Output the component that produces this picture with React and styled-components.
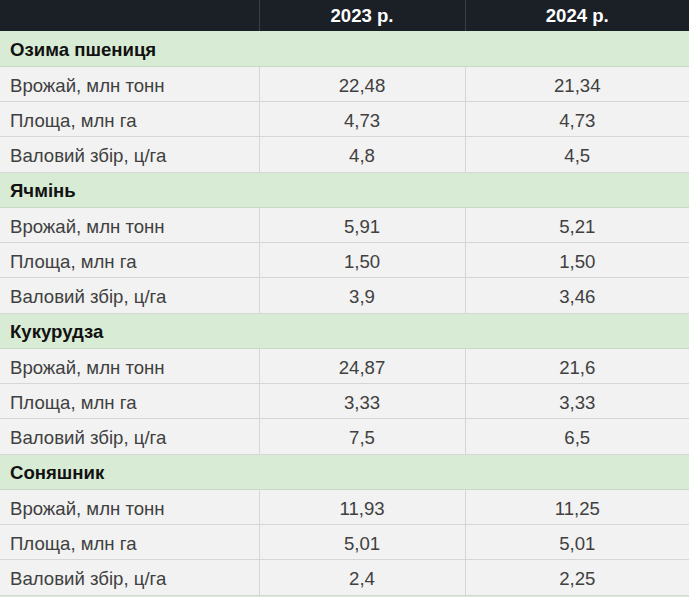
import { Fragment } from "react";
import styled, { createGlobalStyle } from "styled-components";

const GlobalStyle = createGlobalStyle`
  html, body {
    margin: 0;
    padding: 0;
    background: #f2f2f2;
    overflow: hidden;
  }
  body {
    font-family: "Liberation Sans", Arial, sans-serif;
  }
`

const Table = styled.table`
  width: 689px;
  border-collapse: collapse;
  table-layout: fixed;
  font-size: 18.6px;
  color: #404040;
`

const HeadRow = styled.tr`
  height: 31px;
`

const HeadCell = styled.th`
  padding: 1px 10px 0;
  background: #1b1f26;
  color: #ffffff;
  font-weight: bold;
  text-align: center;
  border-left: 1px solid #3a3f47;
  &:first-child {
    border-left: none;
  }
`

const SectionCell = styled.td`
  padding: 3px 10px 0;
  background: #d8ebd4;
  color: #111;
  font-weight: bold;
  border-bottom: 1px solid #c9d9c6;
`

const Row = styled.tr`
  height: 35.25px;
`

const Cell = styled.td`
  padding: 4px 10px 0;
  background: #f2f2f2;
  text-align: ${p => (p.$label ? "left" : "center")};
  border-bottom: 1px solid #d6d6d6;
  border-left: 1px solid #d6d6d6;
  &:first-child {
    border-left: none;
  }
`

const data = [
  {
    name: "Озима пшениця",
    rows: [
      ["Врожай, млн тонн", "22,48", "21,34"],
      ["Площа, млн га", "4,73", "4,73"],
      ["Валовий збір, ц/га", "4,8", "4,5"],
    ],
  },
  {
    name: "Ячмінь",
    rows: [
      ["Врожай, млн тонн", "5,91", "5,21"],
      ["Площа, млн га", "1,50", "1,50"],
      ["Валовий збір, ц/га", "3,9", "3,46"],
    ],
  },
  {
    name: "Кукурудза",
    rows: [
      ["Врожай, млн тонн", "24,87", "21,6"],
      ["Площа, млн га", "3,33", "3,33"],
      ["Валовий збір, ц/га", "7,5", "6,5"],
    ],
  },
  {
    name: "Соняшник",
    rows: [
      ["Врожай, млн тонн", "11,93", "11,25"],
      ["Площа, млн га", "5,01", "5,01"],
      ["Валовий збір, ц/га", "2,4", "2,25"],
    ],
  },
]

function App() {
  return (
    <>
      <GlobalStyle />
      <Table>
        <colgroup>
          <col style={{ width: 259 }} />
          <col style={{ width: 206 }} />
          <col />
        </colgroup>
        <thead>
          <HeadRow>
            <HeadCell></HeadCell>
            <HeadCell>2023 р.</HeadCell>
            <HeadCell>2024 р.</HeadCell>
          </HeadRow>
        </thead>
        <tbody>
          {data.map(section => (
            <Fragment key={section.name}>
              <Row>
                <SectionCell colSpan={3}>{section.name}</SectionCell>
              </Row>
              {section.rows.map((r, i) => (
                <Row key={i}>
                  <Cell $label>{r[0]}</Cell>
                  <Cell>{r[1]}</Cell>
                  <Cell>{r[2]}</Cell>
                </Row>
              ))}
            </Fragment>
          ))}
          <Row>
            <SectionCell colSpan={3}></SectionCell>
          </Row>
        </tbody>
      </Table>
    </>
  );
}

export default App;
